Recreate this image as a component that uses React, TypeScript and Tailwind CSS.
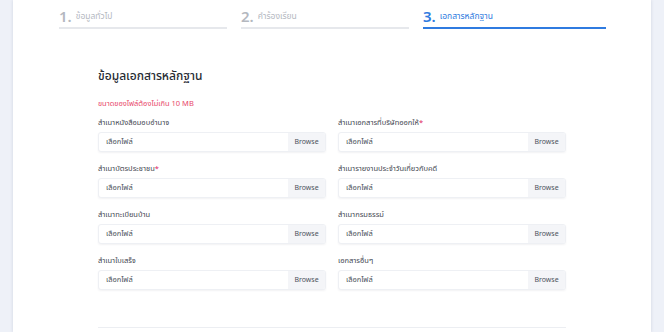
const steps = [
  { no: '1.', label: 'ข้อมูลทั่วไป', width: 'w-[168px]', active: false },
  { no: '2.', label: 'คำร้องเรียน', width: 'w-[168px]', active: false },
  { no: '3.', label: 'เอกสารหลักฐาน', width: 'w-[183px]', active: true },
]

const fields = [
  { label: 'สำเนาหนังสือมอบอำนาจ', required: false },
  { label: 'สำเนาเอกสารที่บริษัทออกให้', required: true },
  { label: 'สำเนาบัตรประชาชน', required: true },
  { label: 'สำเนารายงานประจำวันเกี่ยวกับคดี', required: false },
  { label: 'สำเนาทะเบียนบ้าน', required: false },
  { label: 'สำเนากรมธรรม์', required: false },
  { label: 'สำเนาใบเสร็จ', required: false },
  { label: 'เอกสารอื่นๆ', required: false },
]

function FileField({ label, required }: { label: string; required: boolean }) {
  return (
    <div className="flex flex-col">
      <div className="h-[16px] text-[7.5px] leading-[16px] text-[#3f4650]">
        {label}
        {required && <span className="text-[#e0245e]">*</span>}
      </div>
      <div className="mt-[2px] flex h-[20px] overflow-hidden rounded-[3px] border border-[#eef0f4] bg-white shadow-[0_1px_2px_rgba(30,40,70,0.06)]">
        <div className="flex flex-1 items-center pl-[7px] text-[7.5px] text-[#4a505a]">เลือกไฟล์</div>
        <div className="flex w-[37px] items-center justify-center bg-[#f4f5f8] text-[7px] text-[#4d535c]">Browse</div>
      </div>
    </div>
  )
}

export default function App() {
  return (
    <div
      className="flex h-[332px] w-[664px] overflow-hidden bg-[#eef1f8]"
      style={{ fontFamily: '"Noto Sans", "Noto Sans Thai", sans-serif' }}
    >
      <div className="ml-[13px] h-full w-[638px] bg-white shadow-[0_0_3px_rgba(120,130,160,0.25)]">
        <div className="ml-[46px] flex gap-[14px] pt-[5px]">
          {steps.map((s) => (
            <div
              key={s.no}
              className={`${s.width} flex h-[24px] items-center gap-[4px] border-b-2 ${s.active ? 'border-[#2f7be0]' : 'border-[#e6e8ec]'}`}
            >
              <span className={`text-[15px] font-semibold ${s.active ? 'text-[#2f7be0]' : 'text-[#b4b8bf]'}`}>{s.no}</span>
              <span className={`text-[8.5px] ${s.active ? 'text-[#2f7be0]' : 'text-[#b4b8bf]'}`}>{s.label}</span>
            </div>
          ))}
        </div>

        <div className="ml-[85px] w-[468px]">
          <div className="mt-[38px] text-[12px] font-medium leading-[18px] text-[#262b33]">ข้อมูลเอกสารหลักฐาน</div>
          <div className="mt-[11px] text-[7.5px] leading-[14px] text-[#e8476a]">ขนาดของไฟล์ต้องไม่เกิน 10 MB</div>
          <div className="mt-[4px] grid grid-cols-2 gap-x-[12px] gap-y-[8px]">
            {fields.map((f) => (
              <FileField key={f.label} label={f.label} required={f.required} />
            ))}
          </div>
          <div className="mt-[37px] border-t border-[#eceef2]" />
        </div>
      </div>
    </div>
  )
}
